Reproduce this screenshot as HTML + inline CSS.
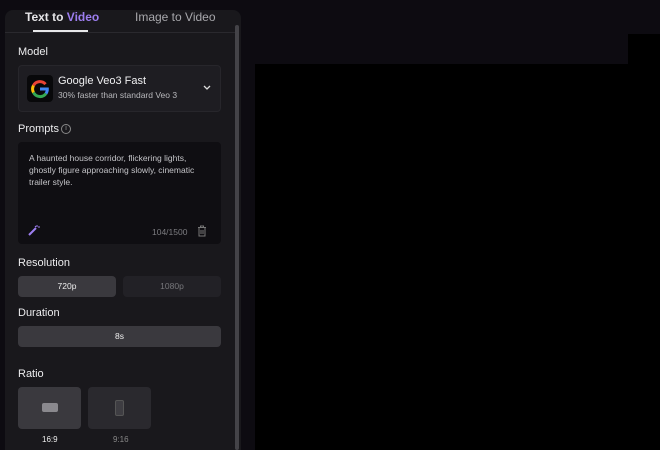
<!DOCTYPE html>
<html><head><style>
*{margin:0;padding:0;box-sizing:border-box}
html,body{width:660px;height:450px;overflow:hidden}
body{background:#0d0b11;font-family:"Liberation Sans",sans-serif;position:relative;color:#e8e8ea}
.blk{position:absolute;background:#000}
.panel{position:absolute;left:5px;top:10px;width:236px;height:440px;background:#19181c;border-radius:8px 8px 0 0}
.a{position:absolute;white-space:nowrap}
.lbl{font-size:11px;color:#ececee}
.box{position:absolute;border-radius:4px}
</style></head><body>
<div class="blk" style="left:255px;top:64px;width:405px;height:386px"></div>
<div class="blk" style="left:628px;top:34px;width:32px;height:40px"></div>
<div class="panel"></div>
<div class="a" style="left:235px;top:25px;width:4px;height:425px;background:#444348;border-radius:2px"></div>
<div class="a" style="left:25px;top:10px;font-size:12px;font-weight:bold;color:#e6e6e8">Text to <span style="color:#9d7ef0">Video</span></div>
<div class="a" style="left:135px;top:10px;font-size:12px;color:#a8a8ac">Image to Video</div>
<div class="a" style="left:5px;top:32px;width:230px;height:1px;background:#2a292e"></div>
<div class="a" style="left:33px;top:30px;width:55px;height:2px;background:#e8e8ea"></div>
<div class="a lbl" style="left:18px;top:46px">Model</div>
<div class="box" style="left:18px;top:65px;width:203px;height:47px;background:#1e1d22;border:1px solid #27262b"></div>
<div class="box" style="left:27px;top:75px;width:26px;height:27px;background:#08080a"></div>
<svg class="a" style="left:30px;top:79px" width="20" height="20" viewBox="0 0 20 20">
<path d="M15.5 5.2A7.3 7.3 0 0 0 3.5 6.5" stroke="#ea4335" stroke-width="3" fill="none"/>
<path d="M3.5 6.5a7.3 7.3 0 0 0 0 7" stroke="#fbbc05" stroke-width="3" fill="none"/>
<path d="M3.5 13.5a7.3 7.3 0 0 0 12.5 1" stroke="#34a853" stroke-width="3" fill="none"/>
<path d="M16 14.5A7.3 7.3 0 0 0 17.3 10H10" stroke="#4285f4" stroke-width="3" fill="none"/></svg>
<div class="a" style="left:58px;top:75px;font-size:11px;color:#f0f0f2">Google Veo3 Fast</div>
<div class="a" style="left:58px;top:90px;font-size:8.5px;color:#b8b8bc">30% faster than standard Veo 3</div>
<svg class="a" style="left:203px;top:85px" width="8" height="6"><path d="M1 1l3 3 3-3" stroke="#ddd" stroke-width="1.3" fill="none"/></svg>
<div class="a lbl" style="left:18px;top:123px">Prompts</div>
<div class="a" style="left:61px;top:124px;width:10px;height:10px;border:1px solid #888;border-radius:50%;font-size:7px;color:#999;text-align:center;line-height:8px">i</div>
<div class="box" style="left:18px;top:142px;width:203px;height:102px;background:#0f0e12"></div>
<div class="a" style="left:29px;top:152px;width:185px;white-space:normal;font-size:8.5px;line-height:12px;color:#c4c4c8">A haunted house corridor, flickering lights, ghostly figure approaching slowly, cinematic trailer style.</div>
<svg class="a" style="left:28px;top:224px" width="12" height="12"><path d="M1 11l7-7" stroke="#9d7ef0" stroke-width="2"/><path d="M9 1v2M10 3h2M7 2l1 1" stroke="#9d7ef0" stroke-width="1"/></svg>
<div class="a" style="left:152px;top:227px;font-size:8.5px;color:#7c7c80">104/1500</div>
<svg class="a" style="left:197px;top:225px" width="10" height="12"><path d="M1 2.5h8M3.5 2.5V1h3v1.5M2 3v8h6V3M4 5v4M6 5v4" stroke="#777" stroke-width="1" fill="none"/></svg>
<div class="a lbl" style="left:18px;top:257px">Resolution</div>
<div class="box" style="left:18px;top:276px;width:98px;height:21px;background:#3a393e;font-size:8.5px;text-align:center;line-height:21px;color:#eee">720p</div>
<div class="box" style="left:123px;top:276px;width:98px;height:21px;background:#222126;font-size:8.5px;text-align:center;line-height:21px;color:#77777b">1080p</div>
<div class="a lbl" style="left:18px;top:307px">Duration</div>
<div class="box" style="left:18px;top:326px;width:203px;height:21px;background:#3a393e;font-size:8.5px;text-align:center;line-height:21px;color:#eee">8s</div>
<div class="a lbl" style="left:18px;top:368px">Ratio</div>
<div class="box" style="left:18px;top:387px;width:63px;height:42px;background:#3a393e"></div>
<div class="box" style="left:42px;top:403px;width:16px;height:9px;background:#8a898e;border-radius:2px"></div>
<div class="box" style="left:88px;top:387px;width:63px;height:42px;background:#2a292e"></div>
<div class="box" style="left:115px;top:400px;width:9px;height:16px;background:#3e3d42;border:1px solid #555;border-radius:2px"></div>
<div class="a" style="left:42px;top:435px;font-size:8px;color:#eee">16:9</div>
<div class="a" style="left:113px;top:435px;font-size:8px;color:#888">9:16</div>
</body></html>
